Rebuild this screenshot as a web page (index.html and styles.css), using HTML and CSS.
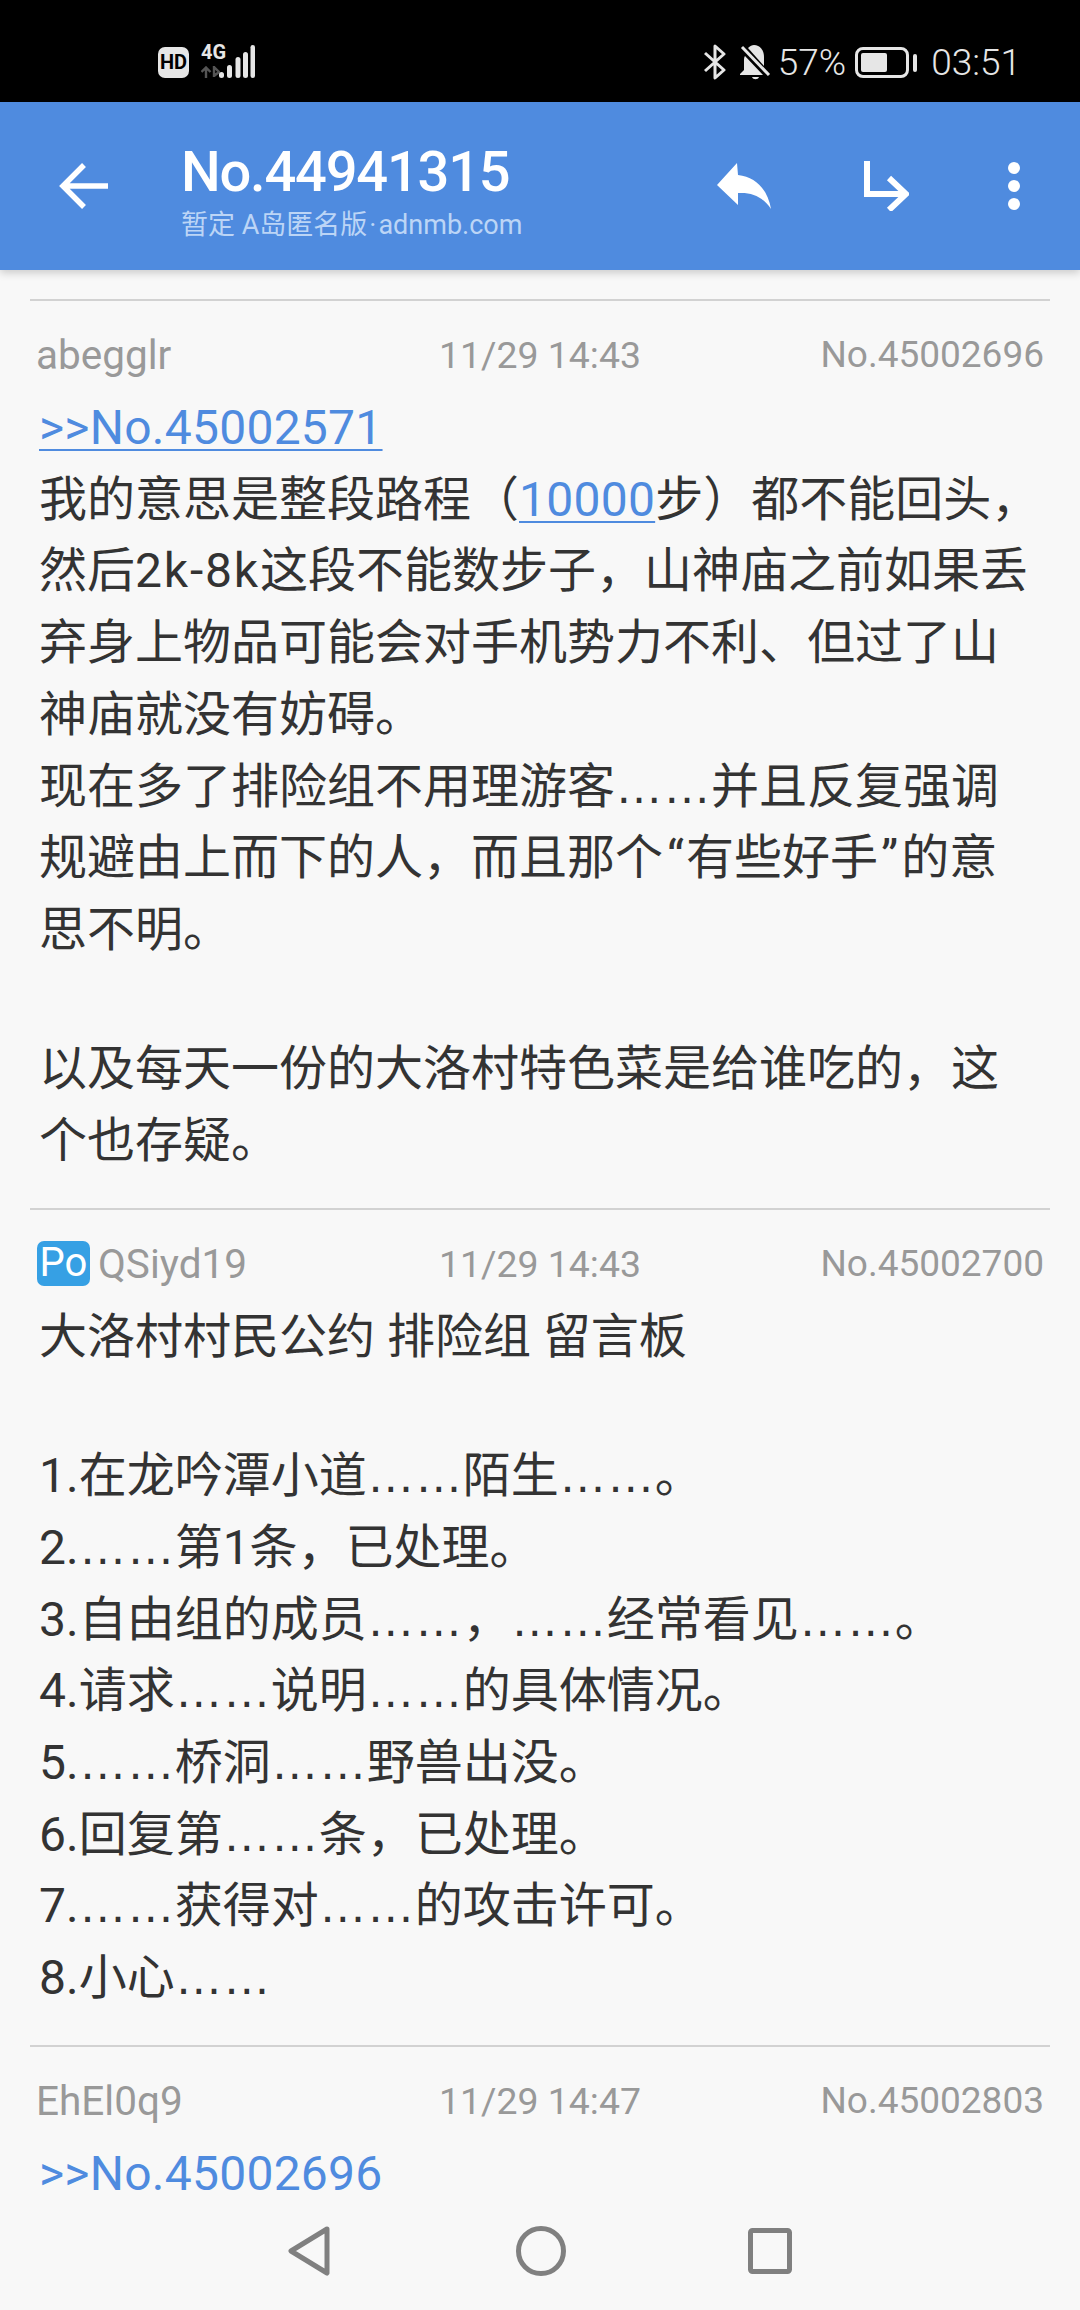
FILE: index.html
```html
<!DOCTYPE html>
<html lang="zh-CN">
<head>
  <meta charset="UTF-8">
  <meta name="viewport" content="width=device-width, initial-scale=1.0">
  <title>No.44941315</title>
  <link rel="stylesheet" href="styles.css">
</head>
<body>
<div class="screen">

  <div class="statusbar">
    <div class="status-left">
      <span class="hd">HD</span>
      <div class="net-col">
        <span class="net">4G</span>
        <svg width="19" height="12" viewBox="0 0 19 12" fill="none" stroke="#555" stroke-width="2.4">
          <path d="M5 12V1M0.5 6L5 1.5 9.5 6M13 0v11M13 1l5 5-5 4"/>
        </svg>
      </div>
      <svg class="bars" width="36" height="34" viewBox="0 0 36 34" fill="#e6e6e6">
        <rect x="0" y="27" width="5" height="6" rx="2.5"/>
        <rect x="8" y="20" width="5" height="13" rx="2.5"/>
        <rect x="16.500" y="12" width="5" height="21" rx="2.5"/>
        <rect x="24" y="7" width="5" height="26" rx="2.5"/>
        <rect x="31.500" y="0" width="4.500" height="33" rx="2.2"/>
      </svg>
    </div>
    <div class="status-right">
      <svg width="22" height="36" viewBox="0 0 22 36" fill="none" stroke="#e6e6e6" stroke-width="3" stroke-linejoin="round">
        <path d="M1 9l19 17-9 8V2l9 8-19 17"/>
      </svg>
      <svg class="bell" width="32" height="36" viewBox="0 0 32 36" fill="#e6e6e6">
        <path d="M9 4c2-2 4-3 6-3 6 0 10 5 10 12v9z"/>
        <path d="M6 12c-1 1-1 3-1 5v9l-4 4v1h23z"/>
        <path d="M13 33h7c-1 3-6 3-7 0z"/>
        <path d="M3 3l27 28" stroke="#e6e6e6" stroke-width="3" fill="none"/>
      </svg>
      <span class="pct">57%</span>
      <span class="battery"><span class="battery-fill"></span></span>
      <span class="battery-tip"></span>
      <span class="clock">03:51</span>
    </div>
  </div>

  <header class="appbar">
    <svg class="icon-back" width="49" height="46" viewBox="0 0 49 46" fill="none" stroke="#fff" stroke-width="5.500">
      <path d="M49 23H4M25 2L4 23l21 21"/>
    </svg>
    <div class="titles">
      <div class="title">No.44941315</div>
      <div class="subtitle">暂定 A岛匿名版<span class="sep">·</span>adnmb.com</div>
    </div>
    <svg class="icon-reply" width="54" height="46" viewBox="0 0 54 46" fill="#fff">
      <path d="M20 0L0 22l21 20V30c14-1 25 4 33 16C51 28 40 14 21 12z"/>
    </svg>
    <svg class="icon-jump" width="45" height="50" viewBox="0 0 45 50" fill="none" stroke="#fff" stroke-width="6">
      <path d="M3 0v33h38M25 17l17 16-17 16"/>
    </svg>
    <svg class="icon-more" width="12" height="48" viewBox="0 0 12 48" fill="#fff">
      <circle cx="6" cy="6" r="6"/><circle cx="6" cy="24" r="6"/><circle cx="6" cy="42" r="6"/>
    </svg>
  </header>

  <main class="thread">
    <article class="post">
      <div class="meta">
        <span class="name">abegglr</span>
        <span class="time">11/29 14:43</span>
        <span class="num">No.45002696</span>
      </div>
      <div class="text">
        <a class="quote">&gt;&gt;No.45002571</a><br>
        我的意思是整段路程（<a class="quote">10000</a>步）都不能回头，<br>
        然后<span class="wide">2k-8k</span>这段不能数步子，山神庙之前如果丢<br>
        弃身上物品可能会对手机势力不利、但过了山<br>
        神庙就没有妨碍。<br>
        现在多了排险组不用理游客<span class="dots">……</span>并且反复强调<br>
        规避由上而下的人，而且那个<span class="q-open">“</span>有些好手<span class="q-close">”</span>的意<br>
        思不明。
        <span class="blank"></span>
        以及每天一份的大洛村特色菜是给谁吃的，这<br>
        个也存疑。
      </div>
    </article>

    <article class="post">
      <div class="meta">
        <span class="name"><span class="po">Po</span>QSiyd19</span>
        <span class="time">11/29 14:43</span>
        <span class="num">No.45002700</span>
      </div>
      <div class="text">
        大洛村村民公约 排险组 留言板
        <span class="blank"></span>
        1.在龙吟潭小道<span class="dots">……</span>陌生<span class="dots">……</span>。<br>
        2.<span class="dots">……</span>第1条，已处理。<br>
        3.自由组的成员<span class="dots">……</span>，<span class="dots">……</span>经常看见<span class="dots">……</span>。<br>
        4.请求<span class="dots">……</span>说明<span class="dots">……</span>的具体情况。<br>
        5.<span class="dots">……</span>桥洞<span class="dots">……</span>野兽出没。<br>
        6.回复第<span class="dots">……</span>条，已处理。<br>
        7.<span class="dots">……</span>获得对<span class="dots">……</span>的攻击许可。<br>
        8.小心<span class="dots">……</span>
      </div>
    </article>

    <article class="post">
      <div class="meta">
        <span class="name">EhEl0q9</span>
        <span class="time">11/29 14:47</span>
        <span class="num">No.45002803</span>
      </div>
      <div class="text">
        <a class="quote">&gt;&gt;No.45002696</a>
      </div>
    </article>
  </main>

  <nav class="navbar">
    <svg class="nav-back" width="42" height="50" viewBox="0 0 42 50" fill="none" stroke="#808080" stroke-width="5" stroke-linejoin="round">
      <path d="M39 3L3 25l36 22z"/>
    </svg>
    <svg width="50" height="50" viewBox="0 0 50 50" fill="none" stroke="#808080" stroke-width="5">
      <circle cx="25" cy="25" r="22.500"/>
    </svg>
    <svg class="nav-recent" width="44" height="46" viewBox="0 0 44 46" fill="none" stroke="#808080" stroke-width="5" stroke-linejoin="round">
      <rect x="2.500" y="2.500" width="39" height="41" rx="2"/>
    </svg>
  </nav>

</div>
</body>
</html>
```

FILE: styles.css
```css
* { box-sizing: border-box; }
html, body { margin: 0; padding: 0; }
body { font-family: "Roboto", "Noto Sans CJK SC", sans-serif; background: #f8f8f8; }

.screen { position: relative; width: 1080px; height: 2310px; overflow: hidden; background: #f8f8f8; }

/* status bar */
.statusbar { height: 102px; background: #000; color: #e6e6e6; display: flex; justify-content: space-between; padding: 44px 59px 0 158px; }
.status-left { display: flex; align-items: flex-start; }
.hd { width: 31px; height: 31px; margin-top: 3px; background: #e6e6e6; color: #000; border-radius: 7px; font: bold 20px/31px "Liberation Sans Narrow", "Roboto", sans-serif; text-align: center; }
.net-col { display: flex; flex-direction: column; width: 19px; margin-left: 12px; gap: 5px; }
.net { height: 17px; font: bold 20px/17px "Liberation Sans Narrow", "Roboto", sans-serif; white-space: nowrap; }
.bars { margin: 1px 0 0 -1px; }
.status-right { display: flex; align-items: flex-start; }
.bell { margin-left: 13px; }
.pct { margin-left: 7px; font-size: 37px; line-height: 38px; font-weight: 300; }
.battery { width: 54px; height: 31px; margin: 3px 0 0 9px; padding: 3px; border: 3px solid #e6e6e6; border-radius: 8px; }
.battery-fill { display: block; width: 26px; height: 100%; background: #e6e6e6; border-radius: 2px; }
.battery-tip { width: 4px; height: 18px; margin: 10px 0 0 4px; background: #e6e6e6; border-radius: 2px; }
.clock { margin-left: 14px; font-size: 37px; line-height: 38px; font-weight: 300; }

/* app bar */
.appbar { position: relative; z-index: 2; height: 168px; background: #4f8bdf; display: flex; align-items: center; box-shadow: 0 3px 8px rgba(0,0,0,0.18); color: #fff; }
.icon-back { margin-left: 59px; flex: none; }
.titles { margin-left: 73px; width: 536px; flex: none; padding-top: 12px; }
.title { font-size: 56px; line-height: 60px; font-weight: 500; letter-spacing: -1.200px; }
.subtitle { font-size: 27px; line-height: 34px; color: #bcd5f6; margin-top: 6px; }
.sep { margin: 0 2px; }
.icon-reply { flex: none; }
.icon-jump { flex: none; margin-left: 93px; }
.icon-more { flex: none; margin-left: 99px; }

/* thread */
.thread { padding: 29px 30px 0; }
.post { border-top: 2px solid #d2d2d2; }
.meta { display: grid; grid-template-columns: 1fr auto 1fr; align-items: center; height: 75px; padding: 0 6px; margin-top: 16px; font-size: 37.400px; color: #999; }
.name { display: flex; align-items: center; font-size: 40.500px; }
.num { text-align: right; font-size: 37px; }
.po { width: 53px; height: 45px; margin: 0 8px 0 1px; background: #36a0e4; color: #fff; border-radius: 7px; font-size: 40px; line-height: 44px; text-align: center; }
.text { padding: 0 9px 31.500px; font-size: 48px; line-height: 71.700px; color: #333; }
.blank { display: block; height: 67.500px; }
.quote { color: #4f8bdf; letter-spacing: 0.250px; text-decoration: underline; text-decoration-thickness: 2px; text-underline-offset: 5px; }
.dots { font-family: "Liberation Sans", sans-serif; line-height: 1; }
.wide { letter-spacing: 1.800px; }
.q-open { margin-left: 4px; letter-spacing: 2px; }
.q-close { margin: 0 3px; }

/* nav bar lies over the list */
.navbar { position: absolute; left: 0; right: 0; bottom: 0; height: 118px; display: flex; align-items: center; justify-content: center; gap: 184px; background: #f8f8f8; }
.nav-back { margin-right: 2px; }
.nav-recent { margin-left: -2px; }
```
